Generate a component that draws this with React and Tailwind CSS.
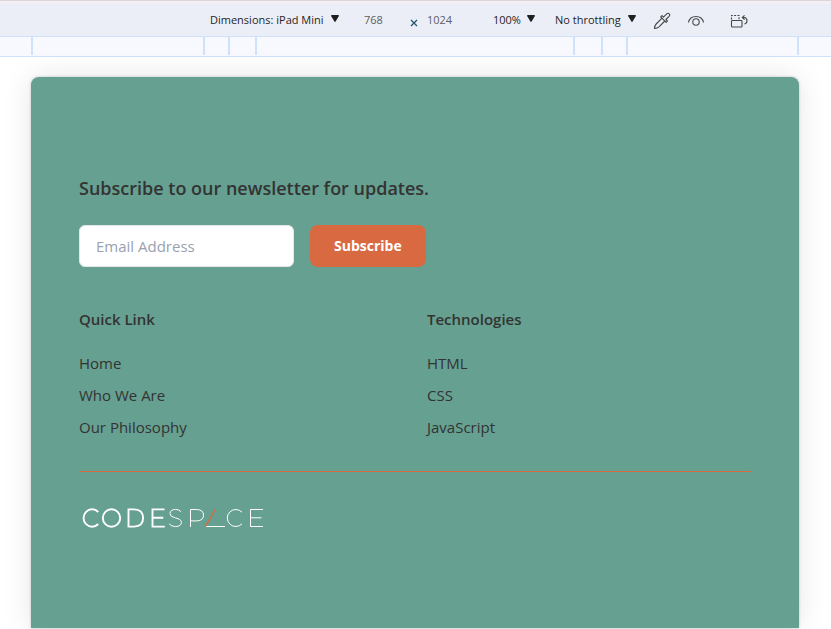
import React from "react";

const ticks = [
  "ml-[31px]",
  "ml-[170px]",
  "ml-[23px]",
  "ml-[25px]",
  "ml-[316px]",
  "ml-[26px]",
  "ml-[23px]",
  "ml-[169px]",
];

function ToolSelect({ label, value, className, width }) {
  return (
    <div className={`flex items-center ${className}`}>
      <select
        aria-label={label}
        className={`appearance-none bg-transparent text-[#1f1f1f] outline-none ${width}`}
      >
        <option>{value}</option>
      </select>
      <svg width="8" height="7" viewBox="0 0 8 7" className="pointer-events-none mb-1" aria-hidden="true">
        <path d="M0.6 0h6.8q.8.3.3 1.2L4.6 6.5q-.6.8-1.2 0L.3 1.2Q-.2.3.6 0z" fill="#1f1f1f" />
      </svg>
    </div>
  );
}

function DeviceToolbar() {
  return (
    <header className="h-[37px] shrink-0 border-t border-b border-t-[#dcd6dc] border-b-[#d0e1fb] bg-[#ebeef6]">
      <div className="h-[3px] bg-[#f3f0f3]" />
      <div className="flex h-8 items-center pt-px pl-[210px] text-[11px]">
        <ToolSelect label="Device" value="Dimensions: iPad Mini" width="w-[121px]" className="" />
        <input aria-label="Width" defaultValue="768" className="ml-[25px] w-[46px] bg-transparent text-[#5c5e62] outline-none" />
        <svg width="8" height="8" viewBox="0 0 8 8" className="mt-1" aria-hidden="true">
          <path d="M1 1l6 6M7 1L1 7" stroke="#20576e" strokeWidth="1.3" />
        </svg>
        <input aria-label="Height" defaultValue="1024" className="ml-[9px] w-[50px] bg-transparent text-[#5c5e62] outline-none" />
        <ToolSelect label="Zoom" value="100%" width="w-[34px]" className="ml-4" />
        <ToolSelect label="Throttling" value="No throttling" width="w-[73px]" className="ml-5" />
        <button aria-label="Pick color" className="ml-4">
          <svg width="20" height="20" viewBox="0 0 20 20" fill="none" stroke="#474747" strokeWidth="1.1" strokeLinejoin="round">
            <path d="M10 7.200L4.200 13Q2.600 14.700 2.500 17.500Q5.300 17.400 7 15.800L12.800 10" />
            <path d="M8.700 5.900l5.400 5.400 1.300-1.300-1.500-1.500 3.200-3.200q1.300-1.400.1-2.500t-2.500.1L11.500 6.100 10 4.600z" />
          </svg>
        </button>
        <button aria-label="Vision deficiencies" className="ml-[14px]">
          <svg width="20" height="20" viewBox="0 0 20 20" fill="none" stroke="#474747" strokeWidth="1.1">
            <path d="M2.400 11.500C4.200 3.500 15.800 3.500 17.600 11.500" />
            <circle cx="10" cy="11" r="3.200" />
          </svg>
        </button>
        <button aria-label="Rotate" className="ml-6">
          <svg width="18" height="18" viewBox="0 0 18 18" fill="none" stroke="#474747" strokeWidth="1.1">
            <rect x="1.500" y="8.500" width="10.500" height="6.500" rx="0.800" />
            <path d="M1.500 7.500V3.500h7.500V8" strokeDasharray="2 1.300" />
            <path d="M12.500 5.500h1.500q3 .3 3 3.300 0 2.700-2.500 3.200M14.500 3.300L12.300 5.500l2.200 2.200" />
          </svg>
        </button>
      </div>
    </header>
  );
}

function LinkColumn({ title, items }) {
  return (
    <nav aria-label={title}>
      <h3 className="text-[15px] leading-6 font-semibold">{title}</h3>
      <ul className="mt-5 space-y-2 text-[15px] leading-6">
        {items.map((item) => (
          <li key={item}>
            <a href="#">{item}</a>
          </li>
        ))}
      </ul>
    </nav>
  );
}

function Logo() {
  return (
    <svg width="184" height="20" viewBox="0 0 184 20" fill="none" stroke="#fff" role="img" aria-label="Codespace">
      <g strokeWidth="1.9">
        <path d="M16.200 4A8.500 8.700 0 1 0 16.200 16" />
        <circle cx="29.500" cy="10" r="8.700" />
        <path d="M46.500 1.400h5.600q9 .4 9 8.600t-9 8.600h-5.600zM82.500 1.400H70.500v17.200h12.300M70.500 9.800h10.800" />
      </g>
      <g strokeWidth="1">
        <path d="M99 3.600Q97 1.400 93.400 1.400q-5.400.3-5.400 4.300 0 3 5.400 4.200 6 1.200 6 4.500 0 4-6 4.200-4 0-6.200-2.800M108.500 19V1.500h6.200q6.800.2 6.800 5.700t-6.800 5.700h-6.200M160 4.200A8.500 8.500 0 1 0 160 15.800M181 1.500h-12.500v17H181M168.500 9.800h11" />
        <path d="M124 18.500h19" />
      </g>
      <path d="M123.500 18.500L133 1.500" stroke="#d96941" strokeWidth="1.400" />
    </svg>
  );
}

export default function App() {
  return (
    <div className="flex min-h-screen flex-col overflow-hidden bg-white font-['Open_Sans','Noto_Sans',sans-serif] text-[#333]">
      <DeviceToolbar />
      <div className="flex h-5 shrink-0 overflow-hidden border-b border-[#d0e1fb] bg-[#f7f9fe]">
        {ticks.map((gap, i) => (
          <span key={i} className={`h-[18px] w-[2px] shrink-0 bg-[#d0e1fb] ${gap}`} />
        ))}
      </div>
      <main className="flex flex-1 flex-col pt-5 pr-8 pb-px pl-[31px]">
        <footer className="flex-1 rounded-t-lg bg-[#66a090] px-12 pt-24 shadow-[0_0_30px_rgba(0,0,0,0.1),0_0_3px_rgba(0,0,0,0.2)]">
          <form onSubmit={(e) => e.preventDefault()}>
            <label htmlFor="email" className="block text-lg leading-[30px] font-semibold">
              Subscribe to our newsletter for updates.
            </label>
            <div className="mt-[22px] flex gap-4">
              <input
                id="email"
                type="email"
                placeholder="Email Address"
                className="h-[42px] w-[215px] rounded-md border border-gray-200 bg-white px-4 text-[15px] outline-none placeholder:text-gray-400"
              />
              <button className="h-[42px] rounded-lg bg-[#d96941] px-6 text-sm font-bold text-white">Subscribe</button>
            </div>
          </form>
          <div className="mt-10 grid grid-cols-2 gap-6">
            <LinkColumn title="Quick Link" items={["Home", "Who We Are", "Our Philosophy"]} />
            <LinkColumn title="Technologies" items={["HTML", "CSS", "JavaScript"]} />
          </div>
          <hr className="mt-8 border-t border-[#d96941]" />
          <div className="mt-9 pl-[3px]">
            <Logo />
          </div>
        </footer>
      </main>
    </div>
  );
}
